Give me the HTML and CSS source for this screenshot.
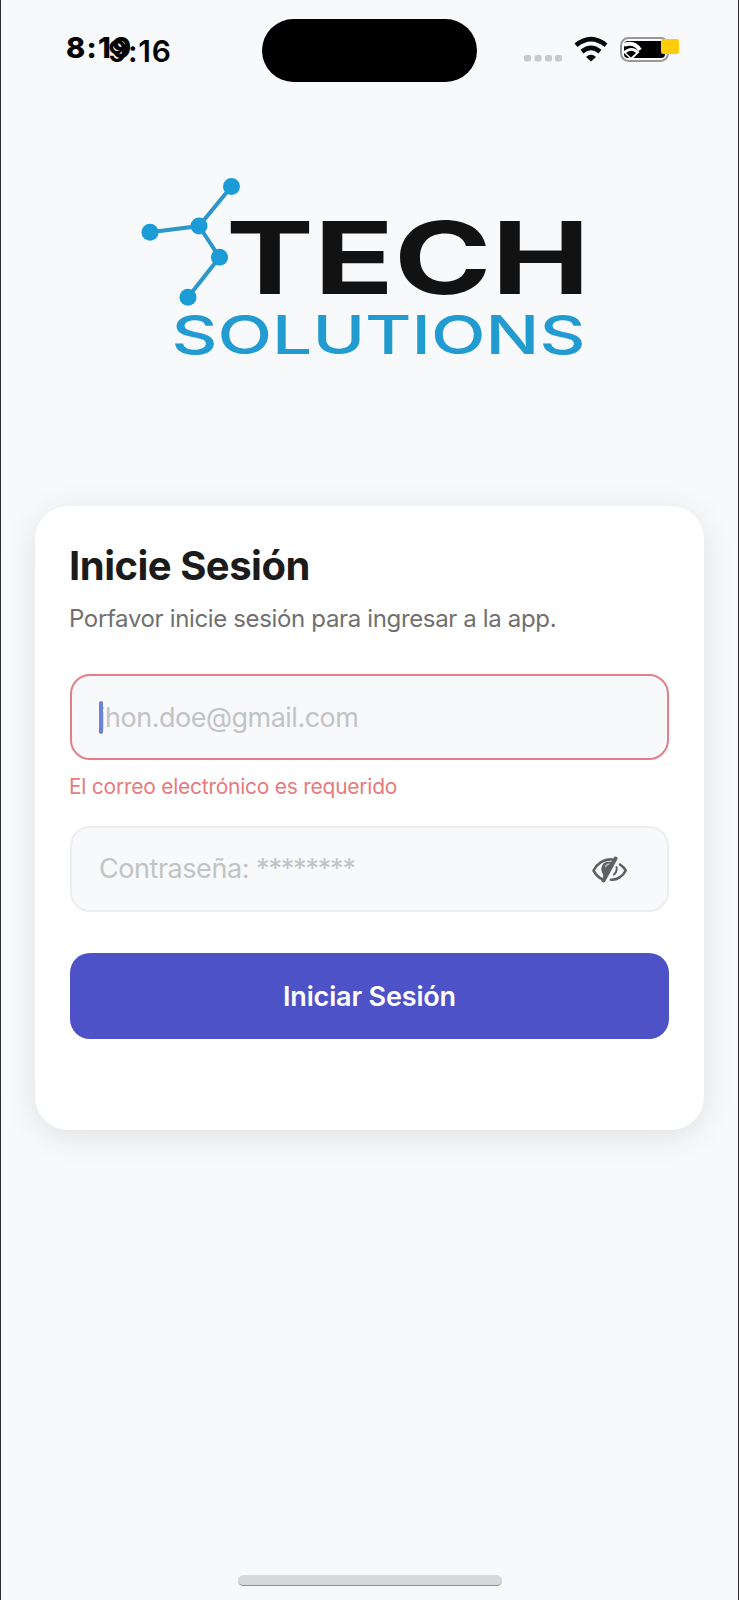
FILE: index.html
```html
<!DOCTYPE html>
<html lang="es">
<head>
<meta charset="utf-8">
<title>Inicie Sesión</title>
<link rel="stylesheet" href="styles.css">
</head>
<body>
<main class="screen">
  <header class="status-bar">
    <div class="times"><span class="time-main">8:19</span><span class="time-alt">9:16</span></div>
    <div class="island"></div>
    <svg class="indicators" width="184" height="40" viewBox="520 30 184 40">
      <g fill="#c8c9ca"><rect x="524" y="55" width="7" height="6.5" rx="2"/><rect x="534.5" y="55" width="7" height="6.5" rx="2"/><rect x="545" y="55" width="7" height="6.5" rx="2"/><rect x="555" y="55" width="7" height="6.5" rx="2"/></g>
      <g fill="none" stroke="#080808" stroke-width="4.6"><path d="M576 45.2Q591 33 606 45.2"/><path d="M582 51.6Q591 44.2 600 51.6"/></g>
      <path d="M586 57Q591 52.5 596 57L591 61.5Z" fill="#080808"/>
      <rect x="621" y="38" width="47" height="23" rx="7.5" fill="#fafafa" stroke="#98989a" stroke-width="2"/>
      <rect x="624" y="41" width="41" height="17" rx="4" fill="#000"/>
      <path d="M624 45Q634 41 640 50" fill="none" stroke="#fff" stroke-width="4"/>
      <path d="M623 52Q631.500 44 639.500 52L631.500 60Z" fill="#fff"/>
      <path d="M626 53Q631.500 48.500 636 53L631 57.500Z" fill="#000"/>
      <rect x="661" y="39" width="18" height="15" rx="2.500" fill="#ffcc0a"/>
    </svg>
  </header>

  <div class="brand">
    <svg width="460" height="190" viewBox="135 170 460 190" role="img" aria-label="Tech Solutions">
      <g stroke="#2c97c8" stroke-width="4"><path fill="none" d="M231.500 186.500L199 226L150 232.300M199 226L219.500 257.300L188 297.300"/></g>
      <g fill="#1c9cd6"><circle cx="231.500" cy="186.500" r="8.500"/><circle cx="199" cy="226" r="8.500"/><circle cx="150" cy="232.300" r="8.500"/><circle cx="219.500" cy="257.300" r="8.500"/><circle cx="188" cy="297.300" r="8.500"/></g>
      <text class="logo-tech" x="226" y="294" textLength="364" lengthAdjust="spacingAndGlyphs">TECH</text>
      <text class="logo-solutions" x="171.500" y="353.500" textLength="414" lengthAdjust="spacingAndGlyphs">SOLUTIONS</text>
    </svg>
  </div>

  <section class="card">
    <h1 class="title">Inicie Sesión</h1>
    <p class="subtitle">Porfavor inicie sesión para ingresar a la app.</p>
    <div class="field field-error"><span class="placeholder email">jhon.doe@gmail.com</span><i class="caret"></i></div>
    <p class="error">El correo electrónico es requerido</p>
    <div class="field"><span class="placeholder password">Contraseña: <span class="mask">********</span></span>
      <svg class="eye" width="36" height="28" viewBox="592 856 36 28" fill="none" stroke="#606060" stroke-width="2.600" stroke-linecap="round" stroke-linejoin="round">
        <path d="M612 859.500C604 858.500 597 864 593.500 870.500C596 875 599 878 602.500 879.300"/>
        <path d="M620 864.500C623 866.500 625 869 625.800 870.500C623 876 617 880.300 611 879.700"/>
        <path d="M616.500 867C617.500 870 615.500 873.500 613.800 874.500" stroke-width="2"/>
        <path d="M608 862.500C602.500 863 600.500 869 603.500 873.500L604 876L613 862.500Z" fill="#606060" stroke-width="1.500"/>
        <path d="M605.500 866.500Q607 864 609 864" stroke="#bbb" stroke-width="1.500"/>
        <path d="M615.500 858.500L603.500 880.500" stroke-width="4"/>
      </svg>
    </div>
    <button class="submit"><span>Iniciar Sesión</span></button>
  </section>
  <div class="home-indicator"></div>
</main>
</body>
</html>
```
FILE: styles.css
```css
* { box-sizing: border-box; }
body { margin: 0; background: #f8f9fb; font-family: Inter, Roboto, sans-serif; }
.screen { width: 739px; height: 1600px; border: solid #2d2d2f; border-width: 0 1px; background: #f8f9fb; display: flex; flex-direction: column; align-items: center; overflow: hidden; }
.status-bar { width: 100%; height: 100px; padding: 19px 34px 0 65px; display: grid; grid-template-columns: 196px 216px 1fr; align-items: start; }
.times { display: flex; white-space: nowrap; color: #050505; line-height: 40px; }
.time-main { width: 42px; font-size: 29px; font-weight: 800; padding-top: 9px; letter-spacing: 1.2px; }
.time-alt { font-size: 30px; font-weight: 600; padding-top: 12px; letter-spacing: .8px; }
.island { width: 215px; height: 63px; border-radius: 32px; background: #000; }
.indicators { justify-self: end; margin-top: 11px; }
.brand { height: 406px; padding: 70px 9px 0 0; }
.brand svg { display: block; overflow: visible; }
.logo-tech { font-size: 101px; font-weight: 700; fill: #121212; }
.logo-solutions { font-size: 53px; font-weight: 500; fill: #229bd0; }
.card { width: 669px; height: 624px; flex: none; padding: 34px 35px; border-radius: 33px; background: #fff; box-shadow: 0 6px 32px rgba(0,0,0,.1); }
.title, .subtitle, .error { margin: 0; white-space: nowrap; }
.title { height: 52px; line-height: 52px; font-size: 40px; font-weight: 700; color: #1b1b1b; letter-spacing: -.5px; margin-left: -1px; }
.subtitle { height: 82px; padding-top: 11px; line-height: 32px; font-size: 24px; color: #707070; letter-spacing: -.35px; margin-left: -1px; }
.field { height: 86px; border: 2px solid #ededf0; border-radius: 20px; background: #f8f9fb; display: flex; align-items: center; padding: 0 39px 0 27px; position: relative; }
.field-error { border-color: #e27f87; }
.placeholder { color: #c2c3c5; font-size: 27px; white-space: nowrap; line-height: 36px; letter-spacing: -.45px; }
.email { padding-top: 1px; letter-spacing: -.5px; }
.mask { letter-spacing: -1.2px; }
.eye { margin: 2px 0 0 auto; }
.caret { position: absolute; left: 27px; top: 25px; width: 4px; height: 33px; border-radius: 2px; background: #6c82d5; }
.error { height: 66px; padding-top: 12px; line-height: 30px; font-size: 21px; color: #e77a7d; letter-spacing: -.25px; margin-left: -1px; }
.submit { width: 100%; height: 86px; margin-top: 41px; border: 0; border-radius: 20px; background: #4e52c7; color: #fff; font: 600 27px Inter, sans-serif; letter-spacing: -.17px; }
.home-indicator { width: 264px; height: 11px; margin-top: 445px; border-radius: 6px; background: #d8d8d8; border-bottom: 1px solid #8f8f91; }
```
